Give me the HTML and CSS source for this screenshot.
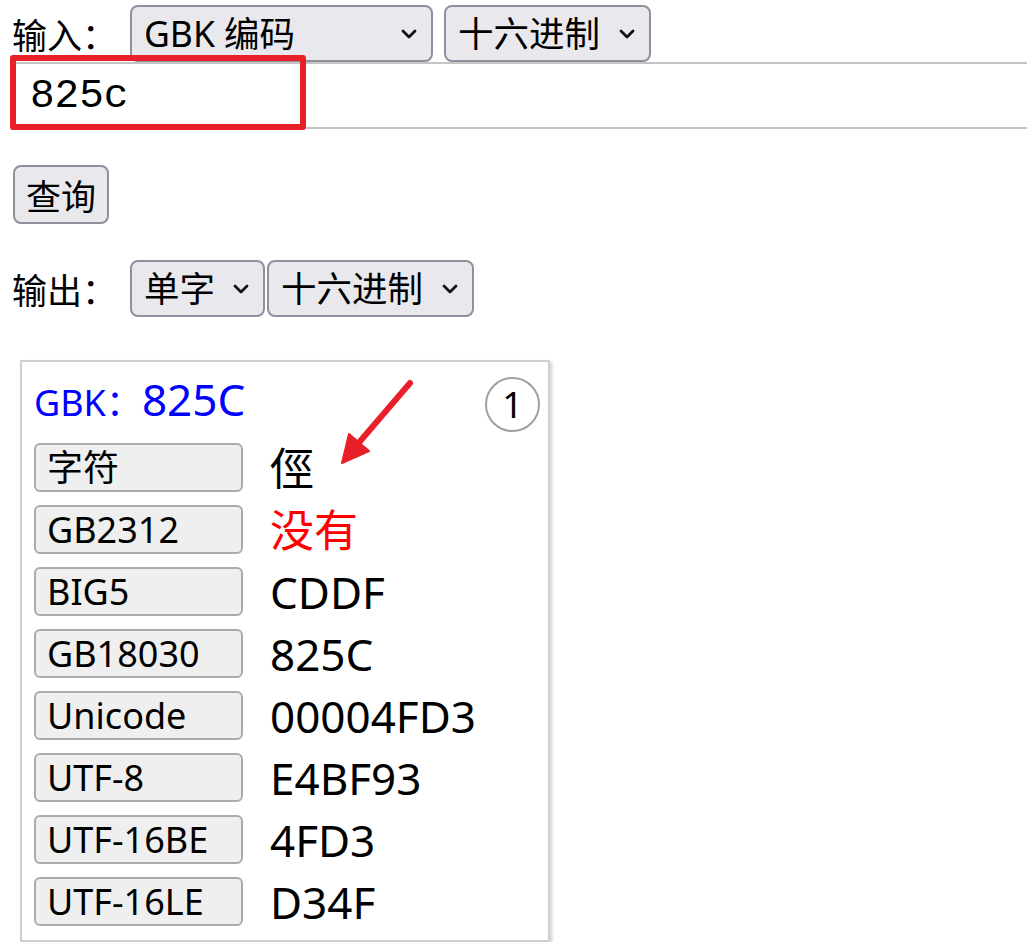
FILE: index.html
```html
<!DOCTYPE html>
<html lang="zh-CN">
<head>
<meta charset="utf-8">
<title>GBK 编码查询</title>
<link rel="stylesheet" href="styles.css">
</head>
<body>
<div class="page">
  <div class="row row-in">
    <span class="label">输入：</span>
    <button class="sel w-enc"><span>GBK 编码</span><svg class="chev" viewBox="0 0 16 10" width="16" height="10"><path d="M2 2 L8 8 L14 2" fill="none" stroke="#111" stroke-width="2.8" stroke-linecap="round" stroke-linejoin="round"/></svg></button>
    <button class="sel w-hex"><span>十六进制</span><svg class="chev" viewBox="0 0 16 10" width="16" height="10"><path d="M2 2 L8 8 L14 2" fill="none" stroke="#111" stroke-width="2.8" stroke-linecap="round" stroke-linejoin="round"/></svg></button>
  </div>
  <div class="input-wrap">
    <input class="code-input" type="text" value="825c">
  </div>
  <div class="btn-row">
    <button class="btn">查询</button>
  </div>
  <div class="row row-out">
    <span class="label">输出：</span>
    <div class="sel-pair">
      <button class="sel w-unit"><span>单字</span><svg class="chev" viewBox="0 0 16 10" width="16" height="10"><path d="M2 2 L8 8 L14 2" fill="none" stroke="#111" stroke-width="2.8" stroke-linecap="round" stroke-linejoin="round"/></svg></button><button class="sel w-hex2"><span>十六进制</span><svg class="chev" viewBox="0 0 16 10" width="16" height="10"><path d="M2 2 L8 8 L14 2" fill="none" stroke="#111" stroke-width="2.8" stroke-linecap="round" stroke-linejoin="round"/></svg></button>
    </div>
  </div>
  <div class="card">
    <div class="card-head">
      <div class="code-title"><span class="ct-small">GBK：</span><span class="ct-big">825C</span></div>
      <div class="num">1</div>
    </div>
    <div class="grid">
      <div class="tag">字符</div><div class="val">俓</div>
      <div class="tag">GB2312</div><div class="val red">没有</div>
      <div class="tag">BIG5</div><div class="val">CDDF</div>
      <div class="tag">GB18030</div><div class="val">825C</div>
      <div class="tag">Unicode</div><div class="val">00004FD3</div>
      <div class="tag">UTF-8</div><div class="val">E4BF93</div>
      <div class="tag">UTF-16BE</div><div class="val">4FD3</div>
      <div class="tag">UTF-16LE</div><div class="val">D34F</div>
    </div>
  </div>
</div>
<div class="mark-box"></div>
<svg class="arrow" width="1027" height="947" viewBox="0 0 1027 947">
  <line x1="410" y1="383" x2="356" y2="446" stroke="#e8202a" stroke-width="6" stroke-linecap="round"/>
  <polygon points="342,463 349,434 369,451" fill="#e8202a" stroke="#e8202a" stroke-width="2" stroke-linejoin="round"/>
</svg>
</body>
</html>
```

FILE: styles.css
```css
html, body {
  margin: 0;
  padding: 0;
  overflow: hidden;
  background: #fff;
}
body {
  font-family: "Noto Sans", "Noto Sans CJK SC", sans-serif;
  color: #000;
}
.page {
  padding: 5px 0 0 12px;
}
.row {
  display: flex;
  align-items: center;
}
.label {
  font-family: "Noto Sans CJK SC", sans-serif;
  font-size: 35px;
  width: 118px;
  line-height: 1;
}
.sel {
  display: inline-flex;
  align-items: center;
  justify-content: space-between;
  box-sizing: border-box;
  height: 57px;
  padding: 0 14px 0 12px;
  background: #e9e9ed;
  border: 2px solid #8f8f9d;
  border-radius: 8px;
  font-family: "Noto Sans", "Noto Sans CJK SC", sans-serif;
  font-size: 35.5px;
  color: #000;
  line-height: 1;
}
.chev { flex: none; }
.w-enc { width: 303px; }
.w-hex { width: 207px; margin-left: 11px; }
.w-unit { width: 135px; }
.w-hex2 { width: 207px; margin-left: 2px; }
.sel-pair { display: flex; }
.input-wrap {
  overflow: hidden;
}
.code-input {
  display: block;
  box-sizing: border-box;
  width: 1100px;
  height: 67px;
  margin: 0;
  padding: 0 0 0 16px;
  border: 2px solid #c4c4c4;
  font-family: "Liberation Mono", monospace;
  font-size: 41px;
  color: #000;
  background: #fff;
  outline: none;
}
.btn-row {
  padding-top: 36px;
}
.btn {
  box-sizing: border-box;
  height: 59px;
  width: 96px;
  margin: 0 0 0 1px;
  padding: 0;
  background: #e9e9ed;
  border: 2px solid #8f8f9d;
  border-radius: 8px;
  font-family: "Noto Sans CJK SC", sans-serif;
  font-size: 35px;
  color: #000;
}
.row-out {
  margin-top: 36px;
}
.card {
  box-sizing: border-box;
  width: 530px;
  margin: 43px 0 0 8px;
  padding: 15px 8px 14px 12px;
  border: 2px solid #d0d0d0;
  box-shadow: 2px 2px 3px rgba(0, 0, 0, 0.18);
}
.card-head {
  display: flex;
  align-items: center;
  justify-content: space-between;
  height: 55px;
  margin-bottom: 11px;
}
.code-title {
  color: #0000ff;
  display: flex;
  align-items: baseline;
  padding-left: 0;
  margin-bottom: 12px;
  line-height: 1;
}
.ct-small {
  font-family: "Noto Sans", "Noto Sans CJK SC", sans-serif;
  font-size: 36px;
}
.ct-big {
  font-size: 44px;
}
.num {
  box-sizing: border-box;
  width: 55px;
  height: 55px;
  border: 2px solid #a0a0a0;
  border-radius: 50%;
  display: flex;
  align-items: center;
  justify-content: center;
  font-size: 36px;
  line-height: 1;
}
.grid {
  display: grid;
  grid-template-columns: 209px 1fr;
  column-gap: 27px;
  row-gap: 13px;
  align-items: center;
}
.tag {
  box-sizing: border-box;
  height: 49px;
  padding-left: 11px;
  display: flex;
  align-items: center;
  background: #efefef;
  border: 2px solid #ababab;
  border-radius: 6px;
  font-size: 36px;
  line-height: 1;
}
.val {
  font-size: 44px;
  line-height: 1;
}
.red { color: #ff0000; }
.mark-box {
  position: absolute;
  left: 10px;
  top: 55px;
  width: 296px;
  height: 75px;
  box-sizing: border-box;
  border: 6px solid #e8202a;
  border-radius: 3px;
}
.arrow {
  position: absolute;
  left: 0;
  top: 0;
  pointer-events: none;
}
```
